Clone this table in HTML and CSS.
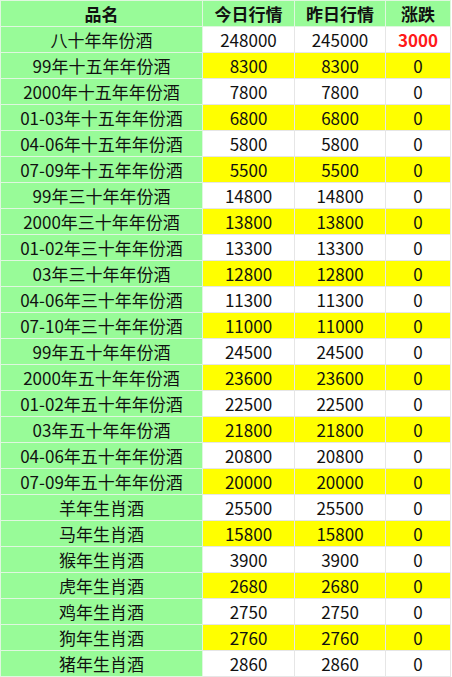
FILE: index.html
```html
<!DOCTYPE html>
<html lang="zh">
<head>
<meta charset="utf-8">
<title>行情</title>
<link rel="stylesheet" href="styles.css">
</head>
<body>
<table class="price-table">
  <colgroup>
    <col class="c-name">
    <col class="c-today">
    <col class="c-yest">
    <col class="c-change">
  </colgroup>
  <thead>
    <tr><th>品名</th><th>今日行情</th><th>昨日行情</th><th>涨跌</th></tr>
  </thead>
  <tbody>
    <tr><td class="name">八十年年份酒</td><td>248000</td><td>245000</td><td class="up">3000</td></tr>
    <tr class="hl"><td class="name">99年十五年年份酒</td><td>8300</td><td>8300</td><td>0</td></tr>
    <tr><td class="name">2000年十五年年份酒</td><td>7800</td><td>7800</td><td>0</td></tr>
    <tr class="hl"><td class="name">01-03年十五年年份酒</td><td>6800</td><td>6800</td><td>0</td></tr>
    <tr><td class="name">04-06年十五年年份酒</td><td>5800</td><td>5800</td><td>0</td></tr>
    <tr class="hl"><td class="name">07-09年十五年年份酒</td><td>5500</td><td>5500</td><td>0</td></tr>
    <tr><td class="name">99年三十年年份酒</td><td>14800</td><td>14800</td><td>0</td></tr>
    <tr class="hl"><td class="name">2000年三十年年份酒</td><td>13800</td><td>13800</td><td>0</td></tr>
    <tr><td class="name">01-02年三十年年份酒</td><td>13300</td><td>13300</td><td>0</td></tr>
    <tr class="hl"><td class="name">03年三十年年份酒</td><td>12800</td><td>12800</td><td>0</td></tr>
    <tr><td class="name">04-06年三十年年份酒</td><td>11300</td><td>11300</td><td>0</td></tr>
    <tr class="hl"><td class="name">07-10年三十年年份酒</td><td>11000</td><td>11000</td><td>0</td></tr>
    <tr><td class="name">99年五十年年份酒</td><td>24500</td><td>24500</td><td>0</td></tr>
    <tr class="hl"><td class="name">2000年五十年年份酒</td><td>23600</td><td>23600</td><td>0</td></tr>
    <tr><td class="name">01-02年五十年年份酒</td><td>22500</td><td>22500</td><td>0</td></tr>
    <tr class="hl"><td class="name">03年五十年年份酒</td><td>21800</td><td>21800</td><td>0</td></tr>
    <tr><td class="name">04-06年五十年年份酒</td><td>20800</td><td>20800</td><td>0</td></tr>
    <tr class="hl"><td class="name">07-09年五十年年份酒</td><td>20000</td><td>20000</td><td>0</td></tr>
    <tr><td class="name">羊年生肖酒</td><td>25500</td><td>25500</td><td>0</td></tr>
    <tr class="hl"><td class="name">马年生肖酒</td><td>15800</td><td>15800</td><td>0</td></tr>
    <tr><td class="name">猴年生肖酒</td><td>3900</td><td>3900</td><td>0</td></tr>
    <tr class="hl"><td class="name">虎年生肖酒</td><td>2680</td><td>2680</td><td>0</td></tr>
    <tr><td class="name">鸡年生肖酒</td><td>2750</td><td>2750</td><td>0</td></tr>
    <tr class="hl"><td class="name">狗年生肖酒</td><td>2760</td><td>2760</td><td>0</td></tr>
    <tr><td class="name">猪年生肖酒</td><td>2860</td><td>2860</td><td>0</td></tr>
  </tbody>
</table>
</body>
</html>
```
FILE: styles.css
```css
html, body {
  margin: 0;
  padding: 0;
  background: #ffffff;
}

.price-table {
  border-collapse: collapse;
  table-layout: fixed;
  width: 450px;
  font-family: "Noto Sans CJK SC", "Noto Sans", sans-serif;
  font-size: 17px;
  color: #111111;
}

.c-name { width: 202px; }
.c-today { width: 92px; }
.c-yest { width: 91px; }
.c-change { width: 65px; }

.price-table th,
.price-table td {
  height: 25px;
  padding: 0;
  border: 1px solid #e6e6e6;
  text-align: center;
  vertical-align: middle;
  line-height: 24px;
  white-space: nowrap;
  overflow: hidden;
}

.price-table th {
  background: #98fb98;
  font-weight: 700;
  border-color: #dff7df;
}

.price-table td.name {
  background: #98fb98;
  border-color: #dff7df;
}

.price-table tr.hl td {
  background: #ffff00;
}

.price-table tr.hl td.name {
  background: #98fb98;
}

.price-table td.up {
  color: #ff1a1a;
  font-weight: 700;
}
```
